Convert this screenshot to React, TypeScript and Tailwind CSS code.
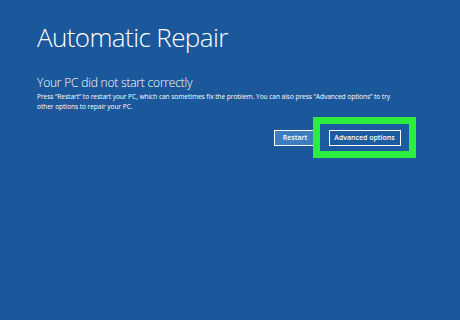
export default function App() {
  return (
    <div className="w-[460px] h-[320px] bg-[#1b579b] text-white overflow-hidden font-['Open_Sans',sans-serif]">
      <div className="pl-[37px] pt-[20px]">
        <h1 className="text-[26px] font-light leading-[34px] tracking-[-0.6px]">Automatic Repair</h1>
        <h2 className="mt-[21px] text-[12px] font-light leading-[16px] tracking-[-0.2px]">Your PC did not start correctly</h2>
        <p className="mt-[1px] text-[6.6px] leading-[9.6px] w-[356px] tracking-[-0.05px]">
          Press “Restart” to restart your PC, which can sometimes fix the problem. You can also press “Advanced options” to try other options to repair your PC.
        </p>
      </div>
      <div className="flex items-center mt-[6px] pl-[274px]">
        <button className="h-[16px] w-[42px] -mr-[3px] border border-white bg-[#3b7dbf] text-[7px] font-semibold leading-none">
          Restart
        </button>
        <div className="relative border-[7px] border-[#2ded3d] bg-[#1b5b9f] w-[103px] h-[41px] flex items-center justify-center">
          <button className="h-[16px] w-[72px] border border-white text-[7px] font-semibold leading-none">
            Advanced options
          </button>
        </div>
      </div>
    </div>
  )
}
